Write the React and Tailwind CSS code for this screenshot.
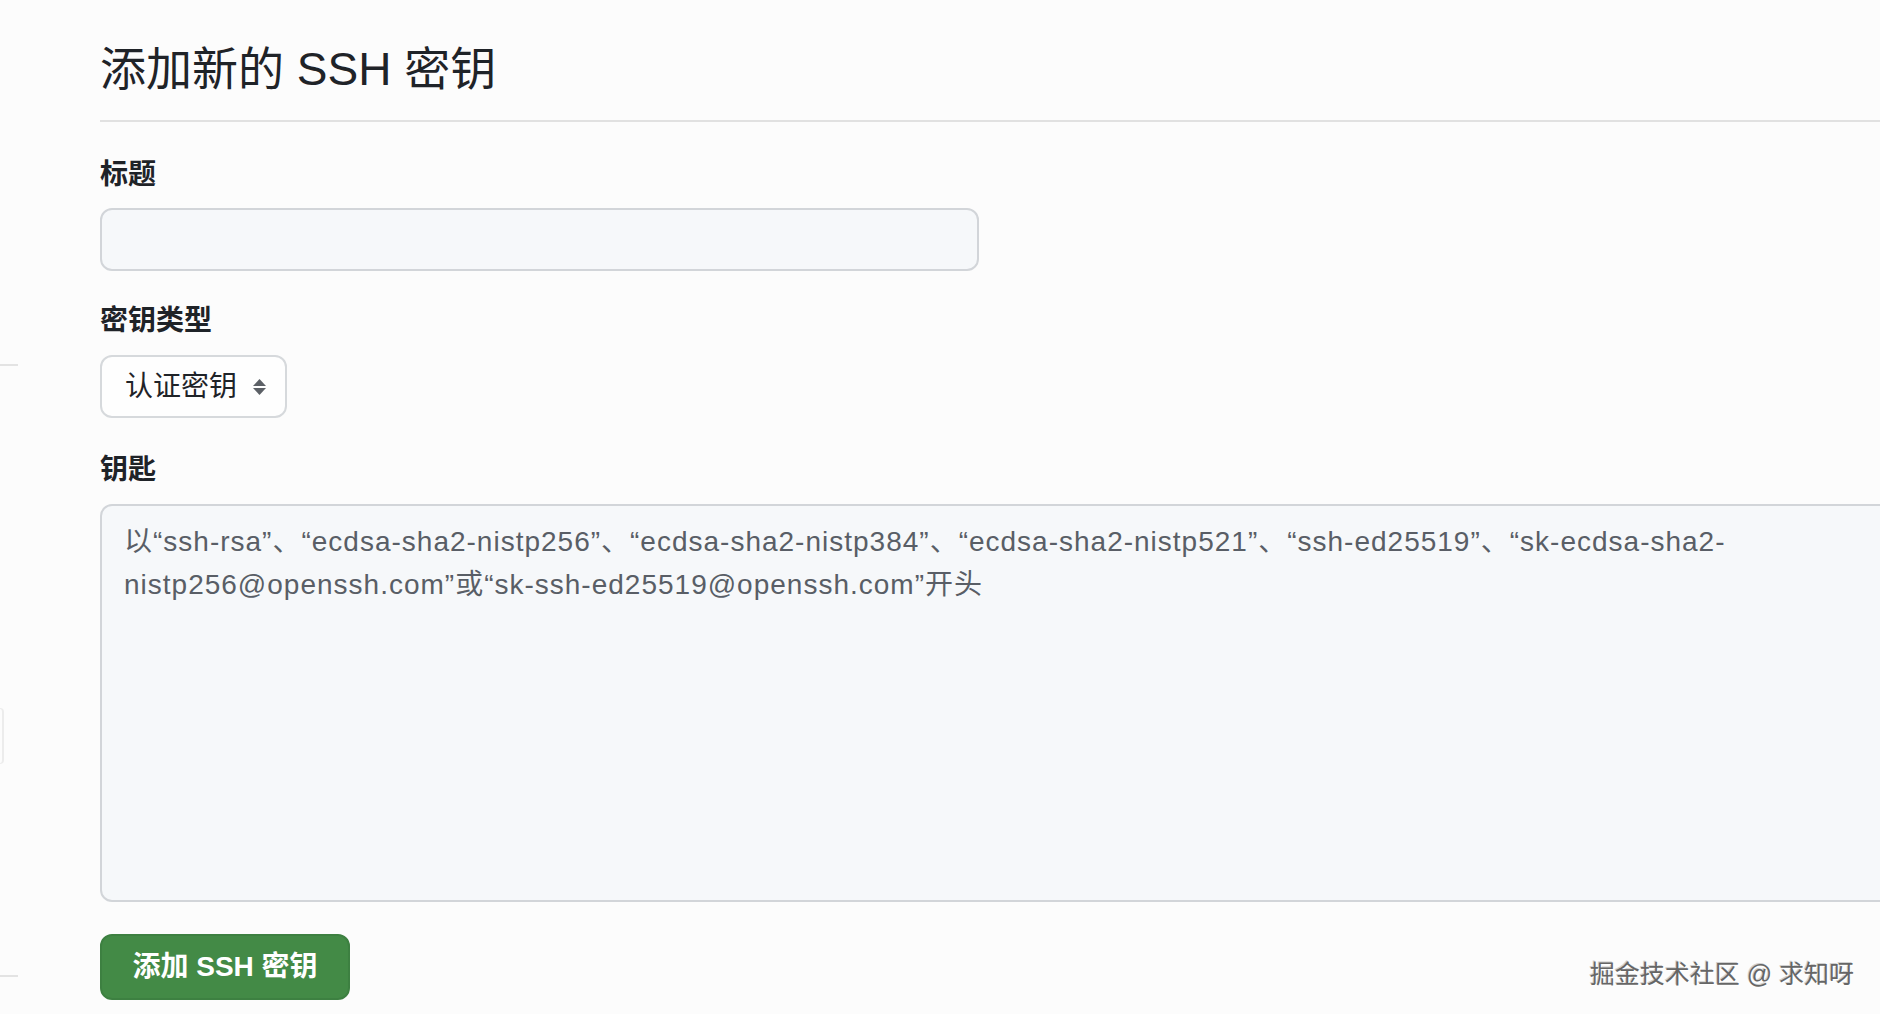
import React from "react";

const FONT = { fontFamily: '"Liberation Sans", "Noto Sans CJK SC", sans-serif' };

function SortArrows() {
  return (
    <svg width="15" height="18" viewBox="0 0 15 18" className="shrink-0">
      <path d="M1 8 L7.5 1 L14 8 Z" fill="#5c6066" />
      <path d="M1 10 L14 10 L7.5 17 Z" fill="#5c6066" />
    </svg>
  );
}

export default function App() {
  const placeholder =
    "以“ssh-rsa”、“ecdsa-sha2-nistp256”、“ecdsa-sha2-nistp384”、“ecdsa-sha2-nistp521”、“ssh-ed25519”、“sk-ecdsa-sha2-\nnistp256@openssh.com”或“sk-ssh-ed25519@openssh.com”开头";

  return (
    <div
      className="relative flex h-[1014px] w-[1880px] overflow-hidden bg-[#fcfcfc] text-[#1f2328]"
      style={FONT}
    >
      {/* sidebar remnants */}
      <div className="flex w-[18px] shrink-0 flex-col">
        <div className="h-[364px]" />
        <div className="h-[2px] w-[18px] bg-[#e3e3e3]" />
        <div className="h-[342px]" />
        <div className="h-[56px] w-[4px] rounded-r-[10px] border-y border-r-2 border-[#ececec]" />
        <div className="h-[211px]" />
        <div className="h-[2px] w-[18px] bg-[#e3e3e3]" />
      </div>

      {/* main content */}
      <div className="ml-[82px] flex w-[1900px] shrink-0 flex-col">
        <div className="mt-[33px] border-b-2 border-[#e1e1e1] pb-[15px]">
          <h1 className="text-[46px] font-normal leading-[72px] text-[#1f2328]">
            添加新的 SSH 密钥
          </h1>
        </div>

        <label className="mt-[32px] text-[28px] font-bold leading-[42px] text-[#1f2328]">
          标题
        </label>
        <input
          type="text"
          className="mt-[12px] h-[63px] w-[879px] rounded-[12px] border-2 border-[#d2d5d9] bg-[#f6f8fa] px-[24px] text-[28px] outline-none"
        />

        <label className="mt-[29px] text-[28px] font-bold leading-[42px] text-[#1f2328]">
          密钥类型
        </label>
        <button
          type="button"
          className="mt-[13px] flex h-[63px] w-[187px] items-center gap-[15px] whitespace-nowrap rounded-[12px] border-2 border-[#d6d9dc] bg-[#fefefe] pl-[23px] pr-[10px] text-[28px] text-[#1f2328]"
        >
          <span className="leading-[42px]">认证密钥</span>
          <SortArrows />
        </button>

        <label className="mt-[31px] text-[28px] font-bold leading-[42px] text-[#1f2328]">
          钥匙
        </label>
        <textarea
          className="mt-[13px] h-[398px] w-[1800px] resize-none rounded-[12px] border-2 border-[#d2d5d9] bg-[#f6f8fa] pl-[22px] pr-[24px] pt-[14px] text-[28px] leading-[43px] tracking-[1px] text-[#1f2328] outline-none placeholder:text-[#595e66]"
          placeholder={placeholder}
        />

        <button
          type="button"
          className="mt-[32px] flex h-[66px] w-[250px] items-center justify-center rounded-[12px] border-2 border-[#3d8041] bg-[#438a46] text-[28px] font-bold text-white"
        >
          添加 SSH 密钥
        </button>
      </div>

      {/* watermark */}
      <div className="absolute right-[26px] top-[959px] text-[25px] leading-[30px] text-[#666666] [text-shadow:1px_1px_0_#ffffff,-1px_-1px_0_#d0d0d0]">
        掘金技术社区 @ 求知呀
      </div>
    </div>
  );
}
